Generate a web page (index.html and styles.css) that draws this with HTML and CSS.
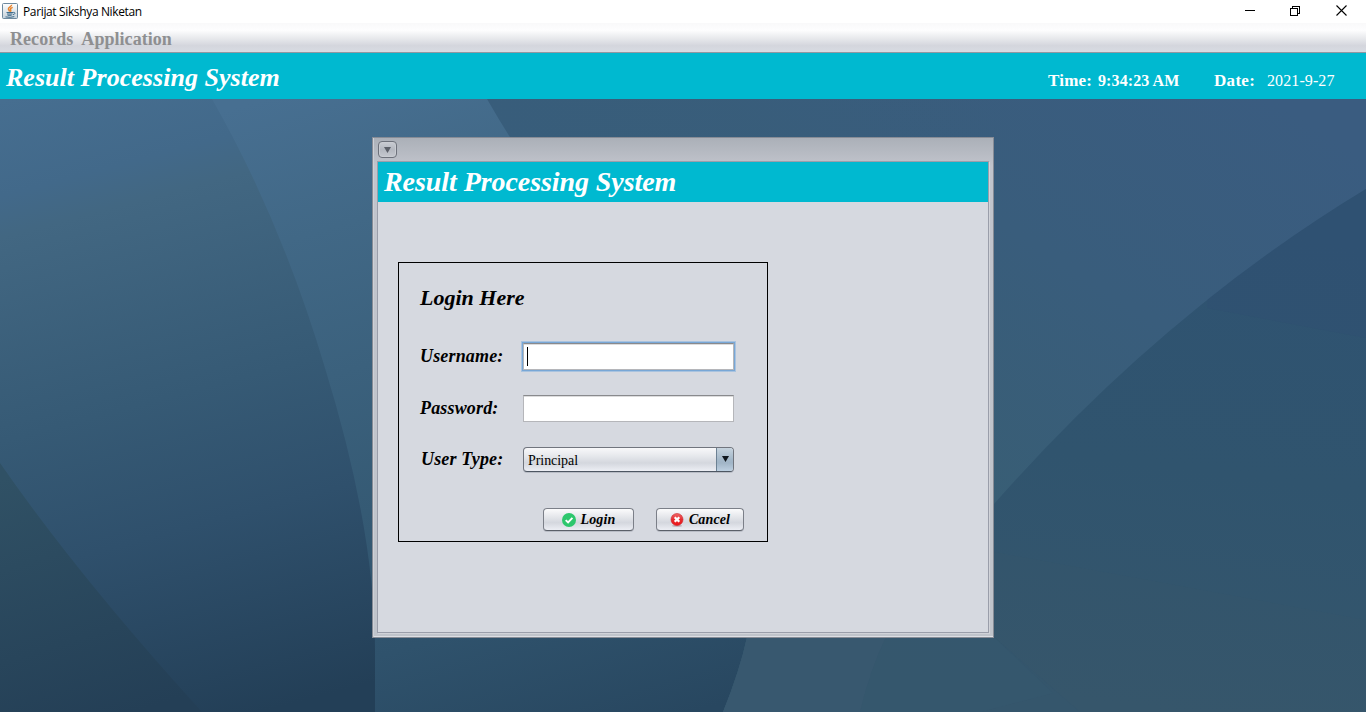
FILE: index.html
```html
<!DOCTYPE html>
<html lang="en">
<head>
<meta charset="utf-8">
<title>Parijat Sikshya Niketan</title>
<link rel="stylesheet" href="styles.css">
</head>
<body>
<header class="titlebar">
  <svg class="app-icon" width="16" height="16" viewBox="0 0 16 16">
    <defs><linearGradient id="cup" x2="0" y2="1"><stop offset="0" stop-color="#fff"/><stop offset="1" stop-color="#c3d0da"/></linearGradient></defs>
    <rect x=".5" y=".5" width="15" height="15" rx="1" fill="url(#cup)" stroke="#6d899e"/>
    <path d="M9.600 1.800C10 3.400 6 4.200 6.400 6c.2 1 1.200 1.300 1 2.600M10.700 4.400C8.700 5.100 8 5.900 8.700 7c.4.700.1 1.200-.4 1.700" fill="none" stroke="#e8842c" stroke-width="1.500"/>
    <path d="M4.500 9.500h6.500M5 11h5.500M5.600 12.300h4M3.500 13.900q5 1 8.800-.3M11.200 9.400c2.400-.5 2.400 1.800-.2 2.200" fill="none" stroke="#3f6c8c" stroke-width="1"/>
  </svg>
  <span class="app-name">Parijat Sikshya Niketan</span>
  <svg class="window-buttons" width="104" height="12" viewBox="0 0 104 12" fill="none" stroke="#000" shape-rendering="crispEdges">
    <path d="M0 5.500h10"/>
    <path d="M45.500 3.500h7v7h-7zM47.500 3.500v-2h7v7h-2"/>
    <path d="M91.500.500l10 10M101.500.500l-10 10" shape-rendering="auto" stroke-width="1.100"/>
  </svg>
</header>
<nav class="menubar"><span>Records</span><span>Application</span></nav>
<section class="banner">
  <h1 class="banner-title">Result Processing System</h1>
  <div class="clock">
    <span class="time-label">Time:</span><span class="time">9:34:23 AM</span>
    <span class="date-label">Date:</span><span class="date">2021-9-27</span>
  </div>
</section>
<main class="desktop">
  <svg class="wallpaper" width="1366" height="613" viewBox="0 99 1366 613">
    <defs>
      <linearGradient id="w1" gradientUnits="userSpaceOnUse" x1="80" y1="80" x2="250" y2="715"><stop offset="0" stop-color="#466e90"/><stop offset=".14" stop-color="#42698a"/><stop offset=".2" stop-color="#426782"/><stop offset=".5" stop-color="#365a75"/><stop offset=".7" stop-color="#2f506c"/><stop offset="1" stop-color="#233f57"/></linearGradient>
      <linearGradient id="w2" gradientUnits="userSpaceOnUse" x1="330" y1="80" x2="530" y2="760"><stop offset="0" stop-color="#476f91"/><stop offset=".2" stop-color="#416886"/><stop offset=".6" stop-color="#355a74"/><stop offset=".8" stop-color="#2f526c"/><stop offset="1" stop-color="#284760"/></linearGradient>
      <linearGradient id="w3" gradientUnits="userSpaceOnUse" x1="1260" y1="90" x2="960" y2="560"><stop offset="0" stop-color="#3a5c80"/><stop offset=".45" stop-color="#395d7c"/><stop offset="1" stop-color="#385e73"/></linearGradient>
      <linearGradient id="w3b" gradientUnits="userSpaceOnUse" x1="480" y1="0" x2="1000" y2="0"><stop offset="0" stop-color="#385d7b"/><stop offset="1" stop-color="#385d7b" stop-opacity="0"/></linearGradient>
      <linearGradient id="w4" gradientUnits="userSpaceOnUse" x1="1240" y1="230" x2="1180" y2="712"><stop offset="0" stop-color="#2f5372"/><stop offset=".5" stop-color="#30546e"/><stop offset="1" stop-color="#35566c"/></linearGradient>
      <linearGradient id="w5" gradientUnits="userSpaceOnUse" x1="30" y1="470" x2="110" y2="720"><stop offset="0" stop-color="#305165"/><stop offset="1" stop-color="#243f56"/></linearGradient>
    </defs>
    <path d="M0 99H1366V712H0z" fill="url(#w3)"/>
    <path d="M480 99H1000V140H480z" fill="url(#w3b)"/>
    <path d="M210 99H487C600 295 790 480 747 637Q740 670 723 712H370z" fill="url(#w2)"/>
    <path d="M0 99H212Q281 220 325 368Q375 530 375 650V712H0z" fill="url(#w1)"/>
    <path d="M0 463Q79 577 202 712H0z" fill="url(#w5)"/>
    <path d="M747 637H994V712H723Q740 670 747 637z" fill="#38586f"/>
    <path d="M1366 189Q1163 312 994 504V637H886Q870 670 860 712H1366z" fill="url(#w4)"/>
    <path d="M1207 308L1366 338V189Q1282 240 1207 300z" fill="#2f5071" opacity=".5"/>
    <path d="M994 552L1366 620V712H1080L994 637z" fill="#37566b" opacity=".3"/>
    <path d="M886 637H994L1053 693L980 712H860Q870 670 886 637z" fill="#36586e" opacity=".8"/>
  </svg>
  <section class="frame">
    <div class="frame-bar"><button class="frame-menu"><svg width="9" height="6" viewBox="0 0 9 6"><path d="M1 0h7L4.500 6z" fill="#5b5f68"/></svg></button></div>
    <div class="frame-body">
      <h2 class="frame-title">Result Processing System</h2>
      <form class="login">
        <h3 class="login-title">Login Here</h3>
        <label class="row"><span class="label">Username:</span><span class="field focused"><i class="caret"></i></span></label>
        <label class="row"><span class="label">Password:</span><span class="field"></span></label>
        <div class="row type-row"><span class="label user-type">User Type:</span><div class="combo"><span class="combo-value">Principal</span><span class="combo-arrow"><svg width="7" height="6" viewBox="0 0 7 6"><path d="M0 0h7L3.500 6z" fill="#10171d"/></svg></span></div></div>
        <div class="actions">
          <button type="button" class="button ok"><svg width="14" height="14" viewBox="0 0 14 14"><circle cx="7" cy="7" r="7" fill="#2dc76d"/><path d="M3.700 7.100l2.400 2.300 4.300-4.500" fill="none" stroke="#fff" stroke-width="1.900"/></svg>Login</button>
          <button type="button" class="button cancel"><svg width="14" height="14" viewBox="0 0 14 14"><defs><linearGradient id="red" x2="0" y2="1"><stop offset="0" stop-color="#f06a6a"/><stop offset=".5" stop-color="#e52b2f"/><stop offset="1" stop-color="#ee1518"/></linearGradient></defs><ellipse cx="7" cy="12.800" rx="5" ry=".9" fill="#b8a6ad"/><circle cx="7" cy="6.500" r="6" fill="url(#red)" stroke="#cc2128" stroke-width=".6"/><path d="M4.700 4.200l4.600 4.600M9.300 4.200L4.700 8.800" stroke="#fff" stroke-width="2.300"/></svg>Cancel</button>
        </div>
      </form>
    </div>
  </section>
</main>
</body>
</html>
```

FILE: styles.css
```css
* { box-sizing: border-box; }
body { margin: 0; width: 1366px; height: 712px; overflow: hidden; display: flex; flex-direction: column; font-family: "Liberation Serif", serif; color: #000; }
h1, h2, h3 { margin: 0; font-weight: bold; font-style: italic; }
button { font-family: inherit; padding: 0; }
svg { display: block; flex: none; }

.titlebar { height: 23px; flex: none; display: flex; align-items: center; padding: 0 17px 0 2px; background: #fff; }
.app-icon { margin-top: -1px; }
.app-name { margin-left: 5px; font: 12px/16px "Open Sans", sans-serif; letter-spacing: -.36px; white-space: nowrap; }
.window-buttons { margin-left: auto; margin-top: -1px; }

.menubar { height: 30px; flex: none; display: flex; gap: 8px; padding: 6px 10px 0; font-size: 18px; line-height: 20px; font-weight: bold; color: #8e8f91; letter-spacing: .05px; background: linear-gradient(#f9f9fa, #fdfdfe 25%, #eaebee 50%, #d4d6dd 78%, #d8dbe2); border-bottom: 1px solid #9297a1; }

.banner { height: 46px; flex: none; display: flex; justify-content: space-between; padding: 0 31px 0 6px; background: #00b9d0; color: #fff; }
.banner-title { margin-top: 10px; font-size: 26px; line-height: 30px; letter-spacing: .03px; }
.clock { display: flex; margin-top: 18px; font-size: 16px; line-height: 20px; white-space: nowrap; }
.time-label, .time, .date-label { font-weight: bold; }
.time-label { width: 50px; font-size: 17px; letter-spacing: .2px; }
.time { width: 116px; letter-spacing: .1px; }
.date-label { width: 53px; font-size: 17px; letter-spacing: .3px; }
.date { width: 68px; letter-spacing: .1px; }

.desktop { position: relative; flex: 1; padding-top: 38px; }
.wallpaper { position: absolute; inset: 0; }
.frame { position: relative; width: 622px; height: 501px; margin: 0 auto; padding: 0 4px 4px; display: flex; flex-direction: column; background: linear-gradient(#abb0b8, #c1c4cc 28px, #c0c4cb); border: 1px solid #878c96; box-shadow: inset 1px 0 #cdd0d6, inset 0 -1px #dddfe4; }
.frame-bar { height: 23px; flex: none; padding: 3px 1px; }
.frame-menu { width: 19px; height: 17px; display: flex; align-items: center; justify-content: center; border: 1px solid #6d717b; border-radius: 4px; background: linear-gradient(#c9ccd3, #b4b8c0 50%, #c5c8cf); box-shadow: inset 0 0 0 1px #c9ccd2; }
.frame-body { flex: 1; border: 1px solid #9a9eaa; background: #d6d9e0; box-shadow: 1px 1px #d1d3d9; }
.frame-title { height: 40px; padding-left: 6px; font-size: 28px; line-height: 40px; letter-spacing: -.07px; color: #fff; background: #00b9d0; }

.login { width: 370px; height: 280px; margin: 60px 0 0 20px; padding: 22px 0 0 21px; border: 1px solid #000; }
.login-title { height: 26px; font-size: 22px; line-height: 26px; }
.row { height: 52px; display: flex; align-items: center; }
.login-title + .row { margin-top: 19px; }
.type-row { height: 50px; }
.label { width: 103px; font-size: 18px; font-weight: bold; font-style: italic; letter-spacing: .16px; }
.user-type { padding-left: 1px; }
.field { width: 211px; height: 27px; padding: 3px; border: 1px solid #b5b6ba; border-top-color: #898a8d; background: #fff; box-shadow: inset 0 1px #dcdcdd; }
.focused { outline: 2px solid #78a7d6; outline-offset: 0; border-color: #b5b6ba; border-top-color: #898a8d; outline-width: 1px; box-shadow: inset 0 1px #dcdcdd, 0 0 0 2px #a9c3df; }
.caret { display: block; width: 1px; height: 19px; background: #000; }
.combo { width: 211px; height: 25px; display: flex; justify-content: space-between; overflow: hidden; border: 1px solid #71757e; border-bottom-color: #4d5662; border-radius: 4px; background: linear-gradient(#f8f8fa, #e6e8ec 35%, #d4d7de 65%, #eceef4); box-shadow: 0 1px #b8bcc5; }
.combo-value { padding-left: 4px; font-size: 14px; line-height: 25px; letter-spacing: -.06px; }
.combo-arrow { width: 17px; display: flex; align-items: center; justify-content: center; border-left: 1px solid #6c8193; background: linear-gradient(#c6d3de, #a4b8c9 50%, #a1b5c7 65%, #bdd0e1); }
.actions { display: flex; gap: 22px; padding: 24px 0 0 123px; }
.button { height: 23px; display: flex; align-items: center; justify-content: center; gap: 5px; font-size: 14px; line-height: 20px; font-weight: bold; font-style: italic; letter-spacing: .12px; color: #000; border: 1px solid #7b7f88; border-bottom-color: #5b6069; border-radius: 4px; background: linear-gradient(#fbfbfc, #e6e8ec 35%, #d4d7de 65%, #eceef4); box-shadow: 0 1px #b9bdc6; }
.ok { width: 91px; }
.cancel { width: 88px; }
```
